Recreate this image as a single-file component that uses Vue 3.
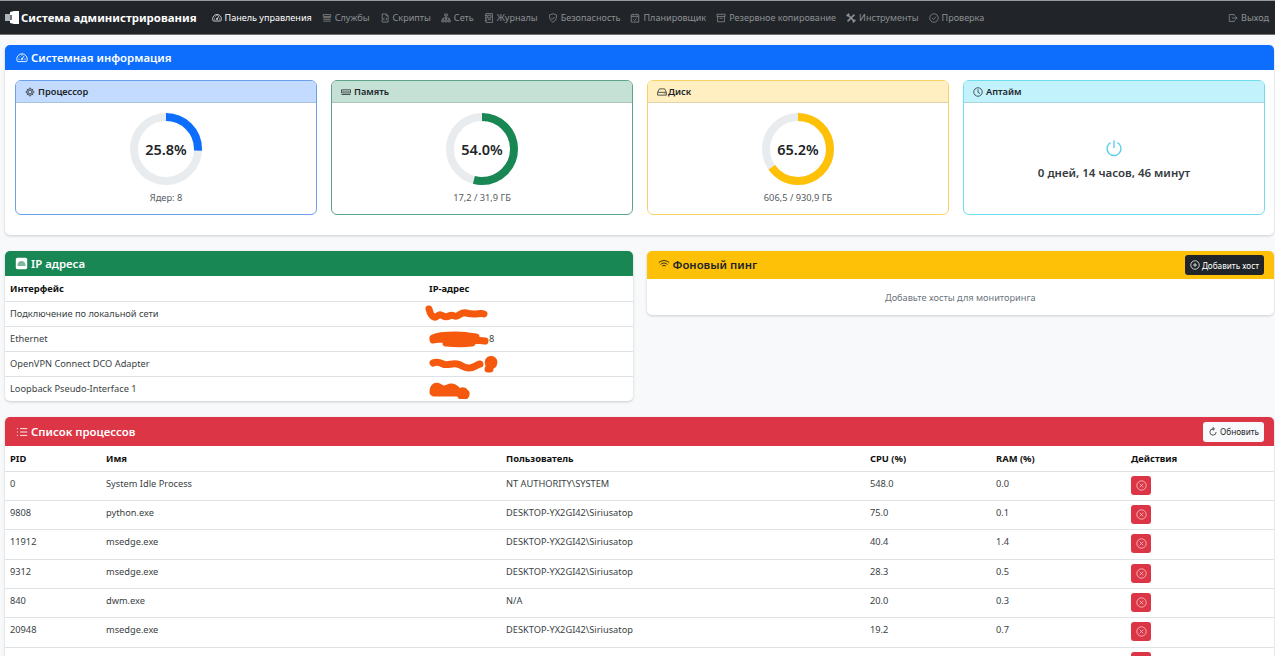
<script setup>
const icons = {
  speed: 'M1.6 12.2a7 7 0 1 1 12.8 0c-.2.4-.6.6-1 .6H2.6c-.4 0-.8-.2-1-.6z M8 9.5l3-4.5 M3.2 9.5h1.6 M11.2 9.5h1.6 M8 3.2v1.6 M4.6 5l1 1 M7 9.5a1 1 0 1 0 2 0 1 1 0 1 0-2 0',
  stack: 'M2 2.5h12v3H2z M2 7.5h12 M2 10h12 M2 13h12',
  file: 'M3.5 1.5H10L13 4.5v10H3.5z M10 1.5v3h3 M7 7.5 5.4 9.5 7 11.5 M9.4 7.5l1.6 2-1.6 2',
  net: 'M6 1.5h4v3.2H6z M1.3 11h3.4v3.2H1.3z M6.3 11h3.4v3.2H6.3z M11.3 11h3.4v3.2h-3.4z M8 4.7V11 M3 11V8h10v3',
  journal: 'M3 1h10.5v14H3z M1.5 4h3 M1.5 8h3 M1.5 12h3 M6 3.5h5v4.5H6z M6 10.5h5',
  shield: 'M8 1.2 13.6 3c.4 5.6-1.6 9.6-5.6 11.8C4 12.6 2 8.6 2.4 3z M5.4 8l2 2 3.2-3.6',
  calendar: 'M2 2.8h12v11.7H2z M2 5.8h12 M5 1v2.5 M11 1v2.5 M5.4 10l2 2 3.2-3.4',
  archive: 'M1.5 2h13v3.5h-13z M2.5 5.5V14h11V5.5 M5.5 8.5h5',
  check: 'M1.2 8a6.8 6.8 0 1 0 13.6 0 6.8 6.8 0 1 0-13.6 0 M5 8.2l2.2 2.2L11 6',
  exit: 'M10 4.5v-2H2v11h8v-2 M6 8h8.5 M11.8 5.2 14.6 8l-2.8 2.8',
  gear: 'M5 8a3 3 0 1 0 6 0 3 3 0 1 0-6 0 M2.8 8a5.2 5.2 0 1 0 10.4 0 5.2 5.2 0 1 0-10.4 0 M8 .8v2 M8 13.2v2 M.8 8h2 M13.2 8h2 M3 3l1.3 1.3 M11.7 11.7 13 13 M13 3l-1.3 1.3 M4.3 11.7 3 13',
  memory: 'M.8 4.5h14.4v5H.8z M.8 12h14.4 M3.5 6.2v1.8 M6.5 6.2v1.8 M9.5 6.2v1.8 M12.5 6.2v1.8',
  hdd: 'M3.8 3h8.4L15 8.5V13H1V8.5z M1 8.5h14 M11 10.8h1 M13 10.8h.5',
  clock: 'M1.2 8a6.8 6.8 0 1 0 13.6 0 6.8 6.8 0 1 0-13.6 0 M8 3.5V8.5l3.2 2',
  power: 'M8 1v7 M4.8 3.2a6.2 6.2 0 1 0 6.4 0',
  wifi: 'M1 6.2a10 10 0 0 1 14 0 M3.4 8.6a6.6 6.6 0 0 1 9.2 0 M5.6 10.8a3.4 3.4 0 0 1 4.8 0 M8 13.2v.1',
  plus: 'M1.2 8a6.8 6.8 0 1 0 13.6 0 6.8 6.8 0 1 0-13.6 0 M8 4.8v6.4 M4.8 8h6.4',
  refresh: 'M8 3a5 5 0 1 0 5 5 M8 .8v4.4l2.6-2.2z',
  remove: 'M1.2 8a6.8 6.8 0 1 0 13.6 0 6.8 6.8 0 1 0-13.6 0 M5.4 5.4l5.2 5.2 M10.6 5.4l-5.2 5.2',
  list: 'M5.5 3.5h9.5 M5.5 8h9.5 M5.5 12.5h9.5 M1.2 3.5h1.4 M1.2 8h1.4 M1.2 12.5h1.4',
  tools: 'M2.5 2.5l11 11 M13.5 2.5l-11 11 M1 5l4-4 M11 15l4-4',
}

const navItems = [
  { icon: 'speed', label: 'Панель управления', active: true },
  { icon: 'stack', label: 'Службы' },
  { icon: 'file', label: 'Скрипты' },
  { icon: 'net', label: 'Сеть' },
  { icon: 'journal', label: 'Журналы' },
  { icon: 'shield', label: 'Безопасность' },
  { icon: 'calendar', label: 'Планировщик' },
  { icon: 'archive', label: 'Резервное копирование' },
  { icon: 'tools', label: 'Инструменты' },
  { icon: 'check', label: 'Проверка' },
]

const RADIUS = 32
const circumference = 2 * Math.PI * RADIUS

const gauges = [
  { icon: 'gear', title: 'Процессор', value: 25.8, caption: 'Ядер: 8', tone: 'blue' },
  { icon: 'memory', title: 'Память', value: 54.0, caption: '17,2 / 31,9 ГБ', tone: 'green' },
  { icon: 'hdd', title: 'Диск', value: 65.2, caption: '606,5 / 930,9 ГБ', tone: 'yellow' },
]

// orange scribbles that hide the addresses in the screenshot
const addresses = [
  { name: 'Подключение по локальной сети', mark: 'M5 5 C6 9 7 12 10 13 S14 10 17 11 S21 14 25 12 S30 13 33 12 S38 8 42 9 S46 10 50 10 S57 9 60 10', suffix: '' },
  { name: 'Ethernet', mark: 'M9 9 C14 6 24 6 32 6 S46 7 52 8 M9 11 C18 9 30 10 44 11 S56 11 61 12 M22 14 C32 15 40 15 48 14', suffix: '8' },
  { name: 'OpenVPN Connect DCO Adapter', mark: 'M9 9 C11 8 15 8 19 10 S28 9 33 10 S40 14 45 14 S52 11 56 10 M67 5.5 a3 3 0 1 0 .1 0 M64 15 h2', suffix: '' },
  { name: 'Loopback Pseudo-Interface 1', mark: 'M9 13 C9 8 12 6 15 8 S20 11 24 9 S30 8 33 11 S37 14 40 12 a3 3 0 1 0 2 2 M10 14 h24', suffix: '' },
]

const processes = [
  { pid: 0, name: 'System Idle Process', user: 'NT AUTHORITY\\SYSTEM', cpu: '548.0', ram: '0.0' },
  { pid: 9808, name: 'python.exe', user: 'DESKTOP-YX2GI42\\Siriusatop', cpu: '75.0', ram: '0.1' },
  { pid: 11912, name: 'msedge.exe', user: 'DESKTOP-YX2GI42\\Siriusatop', cpu: '40.4', ram: '1.4' },
  { pid: 9312, name: 'msedge.exe', user: 'DESKTOP-YX2GI42\\Siriusatop', cpu: '28.3', ram: '0.5' },
  { pid: 840, name: 'dwm.exe', user: 'N/A', cpu: '20.0', ram: '0.3' },
  { pid: 20948, name: 'msedge.exe', user: 'DESKTOP-YX2GI42\\Siriusatop', cpu: '19.2', ram: '0.7' },
  { pid: '', name: '', user: '', cpu: '', ram: '' },
]
</script>

<template>
  <div class="page">
    <nav class="navbar">
      <a class="brand">
        <svg class="logo" viewBox="0 0 15 13" width="15" height="13">
          <path fill="#aeb4ba" d="M0 3h5v7H0z" />
          <path fill="#fff" d="M5 1l4-1h5v13H9l-4-1z" />
          <path fill="#6d7780" d="M5 4h2v5H5z" />
        </svg>
        Система администрирования
      </a>
      <ul class="nav-list">
        <li v-for="item in navItems" :key="item.label" class="nav-item" :class="{ active: item.active }">
          <svg class="ico" :class="{ heavy: item.icon === 'tools' }" viewBox="0 0 16 16"><path :d="icons[item.icon]" /></svg>
          {{ item.label }}
        </li>
      </ul>
      <a class="logout">
        <svg class="ico" viewBox="0 0 16 16"><path :d="icons.exit" /></svg>
        Выход
      </a>
    </nav>

    <main class="content">
      <section class="card">
        <header class="card-head head-blue">
          <svg class="ico head-ico" viewBox="0 0 16 16"><path :d="icons.speed" /></svg>
          Системная информация
        </header>
        <div class="sys-grid">
          <div v-for="g in gauges" :key="g.title" class="mini" :class="g.tone">
            <div class="mini-head">
              <svg class="ico" viewBox="0 0 16 16"><path :d="icons[g.icon]" /></svg>
              {{ g.title }}
            </div>
            <div class="mini-body">
              <div class="ring">
                <svg viewBox="0 0 72 72" width="72" height="72">
                  <circle class="ring-bg" cx="36" cy="36" :r="RADIUS" />
                  <circle
                    class="ring-val"
                    cx="36"
                    cy="36"
                    :r="RADIUS"
                    :stroke-dasharray="`${(g.value / 100) * circumference} ${circumference}`"
                  />
                </svg>
                <span class="ring-text">{{ g.value.toFixed(1) }}%</span>
              </div>
              <div class="caption">{{ g.caption }}</div>
            </div>
          </div>
          <div class="mini cyan">
            <div class="mini-head">
              <svg class="ico" viewBox="0 0 16 16"><path :d="icons.clock" /></svg>
              Аптайм
            </div>
            <div class="mini-body uptime">
              <svg class="power" viewBox="0 0 16 16"><path :d="icons.power" /></svg>
              <div class="uptime-text">0 дней, 14 часов, 46 минут</div>
            </div>
          </div>
        </div>
      </section>

      <div class="two-col">
        <section class="card">
          <header class="card-head head-green">
            <svg class="ip-ico" viewBox="0 0 16 16">
              <rect x="1" y="1" width="14" height="14" rx="2" fill="#fff" />
              <path fill="#7fb69c" d="M3 11c0-4 2-6 5-6s5 2 5 6z" />
            </svg>
            IP адреса
          </header>
          <table class="grid">
            <thead>
              <tr><th class="w-iface">Интерфейс</th><th>IP-адрес</th></tr>
            </thead>
            <tbody>
              <tr v-for="a in addresses" :key="a.name">
                <td>{{ a.name }}</td>
                <td class="ip-cell">
                  <span v-if="a.suffix" class="ip-suffix">{{ a.suffix }}</span>
                  <svg class="scribble" viewBox="0 0 80 20" width="80" height="20"><path :d="a.mark" /></svg>
                </td>
              </tr>
            </tbody>
          </table>
        </section>

        <section class="card ping-card">
          <header class="card-head head-yellow">
            <span class="head-title">
              <svg class="ico head-ico" viewBox="0 0 16 16"><path :d="icons.wifi" /></svg>
              Фоновый пинг
            </span>
            <button class="btn btn-dark">
              <svg class="ico" viewBox="0 0 16 16"><path :d="icons.plus" /></svg>
              Добавить хост
            </button>
          </header>
          <div class="ping-empty">Добавьте хосты для мониторинга</div>
        </section>
      </div>

      <section class="card proc-card">
        <header class="card-head head-red">
          <span class="head-title">
            <svg class="ico head-ico" viewBox="0 0 16 16"><path :d="icons.list" /></svg>
            Список процессов
          </span>
          <button class="btn btn-light">
            <svg class="ico" viewBox="0 0 16 16"><path :d="icons.refresh" /></svg>
            Обновить
          </button>
        </header>
        <table class="grid procs">
          <thead>
            <tr>
              <th class="w-pid">PID</th>
              <th class="w-name">Имя</th>
              <th class="w-user">Пользователь</th>
              <th class="w-cpu">CPU (%)</th>
              <th class="w-ram">RAM (%)</th>
              <th>Действия</th>
            </tr>
          </thead>
          <tbody>
            <tr v-for="(p, i) in processes" :key="i">
              <td>{{ p.pid }}</td>
              <td>{{ p.name }}</td>
              <td>{{ p.user }}</td>
              <td>{{ p.cpu }}</td>
              <td>{{ p.ram }}</td>
              <td>
                <button class="kill">
                  <svg class="ico" viewBox="0 0 16 16"><path :d="icons.remove" /></svg>
                </button>
              </td>
            </tr>
          </tbody>
        </table>
      </section>
    </main>
  </div>
</template>

<style>
html,
body {
  height: 656px;
  overflow: hidden;
  background: #f8f9fa;
}
</style>

<style scoped>
.page {
  font-family: "Noto Sans", "Open Sans", sans-serif;
  font-size: 9.25px;
  color: #212529;
  height: 656px;
  overflow: hidden;
}
.ico {
  width: 10px;
  height: 10px;
  flex: none;
  fill: none;
  stroke: currentColor;
  stroke-width: 1.2;
}
.ico.heavy {
  stroke-width: 2.6;
}
.navbar {
  height: 35px;
  box-sizing: border-box;
  display: flex;
  align-items: center;
  padding: 0 6px 0 5px;
  background: #212529;
  border-top: 1px solid #9a9a9a;
  border-bottom: 1px solid #6f6f6f;
}
.brand {
  display: flex;
  align-items: center;
  gap: 1px;
  color: #fff;
  font-size: 11.4px;
  font-weight: 700;
}
.nav-list {
  display: flex;
  gap: 10px;
  list-style: none;
  margin: 0 0 0 15px;
  padding: 0;
}
.nav-item,
.logout {
  display: flex;
  align-items: center;
  gap: 3px;
  color: #8d9093;
  font-size: 9.05px;
  white-space: nowrap;
}
.nav-item.active {
  color: #fff;
}
.logout {
  margin-left: auto;
}
.content {
  padding: 10px 1px 0 5px;
  display: flex;
  flex-direction: column;
  gap: 16px;
}
.card {
  background: #fff;
  border-radius: 5px;
  box-shadow: 0 1px 3px rgba(0, 0, 0, 0.18);
  overflow: hidden;
}
.card-head {
  display: flex;
  align-items: center;
  justify-content: space-between;
  box-sizing: border-box;
  padding: 0 10px 0 11px;
  font-size: 11.4px;
  font-weight: 600;
}
.head-title {
  display: flex;
  align-items: center;
}
.head-ico {
  width: 12px;
  height: 12px;
  margin-right: 3px;
}
.head-blue {
  height: 25px;
  justify-content: flex-start;
  background: #0d6efd;
  color: #fff;
}
.head-green {
  height: 25px;
  justify-content: flex-start;
  gap: 3px;
  padding-left: 10px;
  background: #198754;
  color: #fff;
}
.head-yellow {
  height: 28px;
  background: #ffc107;
  color: #212529;
}
.head-yellow .head-title {
  margin-top: -2px;
}
.head-red {
  height: 29px;
  background: #dc3545;
  color: #fff;
}
.ip-ico {
  width: 13px;
  height: 13px;
}
.sys-grid {
  display: grid;
  grid-template-columns: repeat(4, 1fr);
  gap: 14px;
  padding: 10px 9px 20px 10px;
}
.mini {
  border: 1px solid;
  border-radius: 6px;
  overflow: hidden;
  height: 135px;
  box-sizing: border-box;
  display: flex;
  flex-direction: column;
}
.mini-head {
  height: 22px;
  box-sizing: border-box;
  flex: none;
  display: flex;
  align-items: center;
  gap: 3px;
  padding: 0 9px;
  font-size: 9.25px;
  font-weight: 600;
  border-bottom: 1px solid rgba(0, 0, 0, 0.12);
}
.yellow .mini-head {
  gap: 1px;
}
.mini-body {
  flex: 1;
  display: flex;
  flex-direction: column;
  align-items: center;
  padding-top: 10px;
}
.blue { border-color: #6aa0ee; --tone: #0d6efd; }
.green { border-color: #5aa586; --tone: #198754; }
.yellow { border-color: #f7d367; --tone: #ffc107; }
.cyan { border-color: #6fdcef; --tone: #0dcaf0; }
.blue .mini-head { background: #c2dbfe; }
.green .mini-head { background: #c5e1d5; }
.yellow .mini-head { background: #ffefc1; }
.cyan .mini-head { background: #c2f2fb; }
.ring {
  position: relative;
  width: 72px;
  height: 72px;
}
.ring svg {
  display: block;
}
.ring circle {
  fill: none;
  stroke-width: 8;
}
.ring-bg {
  stroke: #e9ecef;
}
.ring-val {
  stroke: var(--tone);
  transform: rotate(-90deg);
  transform-origin: 36px 36px;
}
.ring-text {
  position: absolute;
  inset: 0;
  display: flex;
  align-items: center;
  justify-content: center;
  font-size: 14.5px;
  font-weight: 600;
}
.caption {
  margin-top: 6px;
  color: #555b61;
  line-height: 13px;
}
.uptime {
  justify-content: center;
  padding-top: 2px;
  gap: 8px;
}
.power {
  width: 18px;
  height: 18px;
  fill: none;
  stroke: #55cfe8;
  stroke-width: 1.2;
}
.uptime-text {
  font-size: 11.5px;
  font-weight: 600;
  color: #343a40;
}
.two-col {
  display: grid;
  grid-template-columns: 1fr 1fr;
  gap: 14px;
  align-items: start;
}
.grid {
  width: 100%;
  border-collapse: collapse;
  table-layout: fixed;
}
.grid th,
.grid td {
  height: 25px;
  padding: 0 5px;
  box-sizing: border-box;
  text-align: left;
  border-bottom: 1px solid #dee2e6;
}
.grid th {
  font-size: 9.4px;
  font-weight: 700;
  color: #111;
}
.grid td {
  color: #3a3f44;
}
.grid tr:last-child td {
  border-bottom: 0;
}
.w-iface {
  width: 419px;
}
.ip-cell {
  position: relative;
}
.ip-suffix {
  margin-left: 60px;
}
.scribble {
  position: absolute;
  left: 0;
  top: 2px;
  fill: none;
  stroke: #f4590d;
  stroke-width: 7;
  stroke-linecap: round;
  stroke-linejoin: round;
}
.btn {
  display: inline-flex;
  align-items: center;
  gap: 2px;
  height: 20px;
  padding: 0 5px;
  border: 0;
  border-radius: 3px;
  font: inherit;
  font-size: 8.2px;
  font-weight: 400;
}
.btn-dark {
  background: #212529;
  color: #fff;
}
.btn-light {
  background: #f8f9fa;
  color: #212529;
}
.ping-empty {
  height: 36px;
  display: flex;
  align-items: center;
  justify-content: center;
  color: #6c757d;
  font-size: 9.2px;
}
.procs th {
  height: 25px;
}
.procs td {
  height: 29.4px;
  padding-top: 5px;
  vertical-align: top;
  line-height: 14px;
}
.procs tr:last-child td {
  border-bottom: 1px solid #dee2e6;
}
.w-pid { width: 96px; }
.w-name { width: 400px; }
.w-user { width: 364px; }
.w-cpu { width: 126px; }
.w-ram { width: 135px; }
.kill {
  display: flex;
  align-items: center;
  justify-content: center;
  width: 20px;
  height: 19px;
  margin-top: -1px;
  padding: 0;
  border: 0;
  border-radius: 3px;
  background: #dc3545;
  color: #f6c9ce;
}
.kill .ico {
  width: 11px;
  height: 11px;
}
</style>
